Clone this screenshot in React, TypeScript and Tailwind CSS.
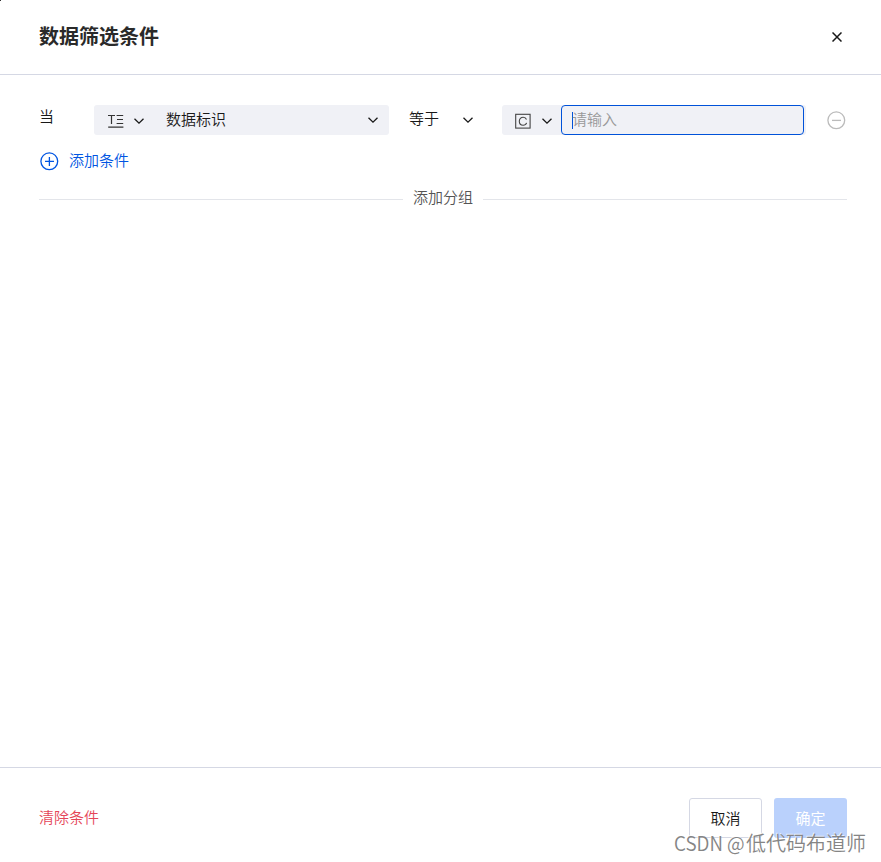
type IconProps = { className?: string };

function Chevron({ className = "" }: IconProps) {
  return (
    <svg className={`h-[10px] w-[10px] shrink-0 ${className}`} viewBox="0 0 10 10" fill="none" stroke="#181818" strokeWidth="1.3">
      <path d="M0.5 2.7 5 7.1 9.5 2.7" />
    </svg>
  );
}

function CloseIcon() {
  return (
    <svg className="h-[10px] w-[10px]" viewBox="0 0 10 10" fill="none" stroke="#181818" strokeWidth="1.5">
      <path d="M0.5 0.5 9.5 9.5M9.5 0.5 0.5 9.5" />
    </svg>
  );
}

function TextTypeIcon() {
  return (
    <svg className="mt-[2px] h-[14px] w-[16px] shrink-0" viewBox="0 0 16 14" fill="none" stroke="#333" strokeWidth="1.2">
      <path d="M0 1.5H7M3.5 1.5V10M8.6 1.5H15.2M9 5.5H15M8.6 9.5H15.2M0.2 13.2H15.4" />
    </svg>
  );
}

function ConstantIcon() {
  return (
    <svg className="mt-[2px] h-[16px] w-[16px] shrink-0" viewBox="0 0 16 16" fill="none" stroke="#444" strokeWidth="1.1">
      <rect x="0.7" y="1.3" width="14.4" height="13.8" />
      <path d="M11.5 6.5C11 5.1 9.8 4.3 8.2 4.3 5.9 4.3 4.3 6 4.3 8.3s1.6 4 3.9 4c1.7 0 2.9-.9 3.4-2.4" />
    </svg>
  );
}

function CircleIcon({ className = "", plus = false }: IconProps & { plus?: boolean }) {
  return (
    <svg className={`h-[19px] w-[19px] shrink-0 ${className}`} viewBox="0 0 19 19" fill="none" stroke="currentColor" strokeWidth="1.3">
      <circle cx="9.3" cy="9.3" r="8.4" />
      <path d={plus ? "M5 9.4H14M9.4 5V14" : "M5 9.4H14"} />
    </svg>
  );
}

export default function App() {
  return (
    <div className="relative flex h-[862px] w-[881px] flex-col overflow-hidden bg-white font-['Noto_Sans_CJK_SC',sans-serif] text-[15px] leading-5 font-[350] text-[#181818]">
      <div className="absolute top-0 left-0 h-px w-px bg-[#333]" />
      <header className="flex h-[75px] shrink-0 items-start justify-between border-b border-[#d5d8e4] pr-[39px] pl-[39px]">
        <h1 className="mt-[21px] text-[20px] leading-[30px] font-bold text-[#2a2a2a]">数据筛选条件</h1>
        <button aria-label="关闭" className="mt-8">
          <CloseIcon />
        </button>
      </header>

      <main className="flex-1 pt-[30px] pr-[34px] pl-[39px]">
        <div className="flex h-[30px] items-center">
          <span className="-mt-2 w-[55px]">当</span>
          <div className="flex h-[30px] w-[295px] items-center rounded-[3px] bg-[#f0f1f6] pr-[11px] pl-[14px]">
            <TextTypeIcon />
            <Chevron className="mt-px ml-[10px]" />
            <span className="-mt-0.5 ml-[22px] flex-1">数据标识</span>
            <Chevron />
          </div>
          <div className="ml-5 flex w-[64px] items-center justify-between">
            <span className="-mt-1">等于</span>
            <Chevron />
          </div>
          <div className="ml-[29px] flex h-[30px] w-[304px] items-center rounded-[3px] bg-[#f0f1f6] pl-[13px]">
            <ConstantIcon />
            <Chevron className="mt-px ml-[11px]" />
            <div className="ml-[9px] flex h-[30px] w-[243px] items-center rounded-[4px] border border-[#0052d9] pl-[10px] text-[#999]">
              <span className="h-[17px] w-px bg-[#0052d9]" />
              <span className="-mt-0.5 -ml-px">请输入</span>
            </div>
          </div>
          <CircleIcon className="mr-px ml-auto text-[#bbb]" />
        </div>

        <button className="mt-[15px] flex h-[22px] items-center text-[#0055e2]">
          <CircleIcon plus className="ml-px" />
          <span className="-mt-0.5 ml-[10px]">添加条件</span>
        </button>

        <div className="mt-[15px] flex h-[24px] items-center gap-[10px] text-[#555]">
          <span className="h-px flex-1 bg-[#e3e5ea]" />
          <span className="-mt-1">添加分组</span>
          <span className="h-px flex-1 bg-[#e3e5ea]" />
        </div>
      </main>

      <footer className="flex h-[95px] shrink-0 items-start border-t border-[#d5d8e4] pt-[30px] pr-[34px] pl-[39px]">
        <button className="mt-[9px] text-[#e54558]">清除条件</button>
        <button className="ml-auto h-10 w-[73px] rounded-[3px] border border-[#d5d8e4]">取消</button>
        <button className="ml-3 h-10 w-[73px] rounded-[3px] bg-[#bad1fc] font-normal text-white">确定</button>
      </footer>

      <div className="absolute top-[830px] left-[674px] flex text-[20px] leading-[26px] whitespace-nowrap text-[#858585] [text-shadow:-1px_-1px_0_#ffffffb0]">
        <span className="w-[72px]">
          <span className="inline-block origin-left scale-x-[0.94]">CSDN @</span>
        </span>
        <span>低代码布道师</span>
      </div>
    </div>
  );
}
